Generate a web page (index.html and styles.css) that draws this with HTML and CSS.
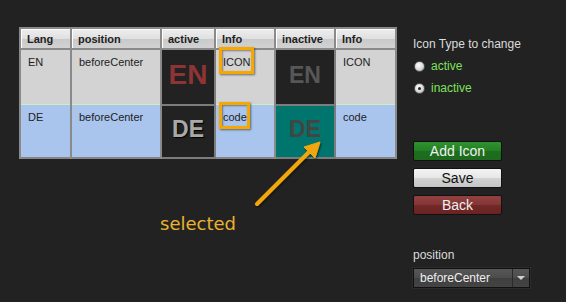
FILE: index.html
```html
<!DOCTYPE html>
<html>
<head>
<meta charset="utf-8">
<link rel="stylesheet" href="styles.css">
</head>
<body>
<div class="page">
  <div class="main">
    <table class="grid">
      <colgroup>
        <col class="c-lang">
        <col class="c-pos">
        <col class="c-act">
        <col class="c-info">
        <col class="c-inact">
        <col class="c-info2">
      </colgroup>
      <thead>
        <tr>
          <th>Lang</th>
          <th>position</th>
          <th>active</th>
          <th>Info</th>
          <th>inactive</th>
          <th>Info</th>
        </tr>
      </thead>
      <tbody>
        <tr class="row-en">
          <td>EN</td>
          <td>beforeCenter</td>
          <td class="icon dark"><span class="big red">EN</span></td>
          <td><span class="mark">ICON</span></td>
          <td class="icon dark"><span class="mid grey">EN</span></td>
          <td>ICON</td>
        </tr>
        <tr class="row-de">
          <td>DE</td>
          <td>beforeCenter</td>
          <td class="icon dark"><span class="mid light">DE</span></td>
          <td><span class="mark">code</span></td>
          <td class="icon teal"><span class="mid darkgrey">DE</span></td>
          <td>code</td>
        </tr>
      </tbody>
    </table>
    <div class="caption">selected</div>
    <svg class="arrow" width="80" height="80" viewBox="0 0 80 80">
      <defs>
        <filter id="sh" x="-20%" y="-20%" width="140%" height="140%">
          <feDropShadow dx="1" dy="1" stdDeviation="1" flood-color="#000" flood-opacity="0.6"/>
        </filter>
      </defs>
      <g filter="url(#sh)" stroke="#f2a60c" fill="#f2a60c">
        <line x1="6" y1="68" x2="60" y2="14" stroke-width="4" stroke-linecap="round"/>
        <polygon points="69,6 64,22 53,11" stroke-width="1" stroke-linejoin="round"/>
      </g>
    </svg>
  </div>
  <div class="side">
    <div class="label">Icon Type to change</div>
    <label class="radio"><span class="dot"></span><span>active</span></label>
    <label class="radio"><span class="dot on"></span><span>inactive</span></label>
    <div class="buttons">
      <div class="btn green">Add Icon</div>
      <div class="btn white">Save</div>
      <div class="btn red">Back</div>
    </div>
    <div class="label pos">position</div>
    <div class="select"><span class="sel-text">beforeCenter</span><span class="sel-arrow"></span></div>
  </div>
</div>
</body>
</html>
```
FILE: styles.css
```css
html, body {
  margin: 0;
  padding: 0;
  background: #222222;
  width: 566px;
  height: 302px;
  overflow: hidden;
  font-family: "Liberation Sans", Arial, sans-serif;
}
.page {
  display: flex;
  align-items: flex-start;
}
.main {
  position: relative;
  padding: 27px 0 0 19px;
  width: 376px;
  flex-shrink: 0;
}
.grid {
  border-collapse: collapse;
  border: 2px solid #858585;
  table-layout: fixed;
  width: 376px;
  font-size: 11px;
  color: #222;
}
.c-lang { width: 51px; }
.c-pos { width: 90px; }
.c-act { width: 54px; }
.c-info { width: 60px; }
.c-inact { width: 60px; }
.c-info2 { width: 61px; }
.grid th {
  height: 19px;
  padding: 0 0 0 6px;
  text-align: left;
  font-weight: bold;
  font-size: 11px;
  color: #1e1e1e;
  background: linear-gradient(#eeeeee 0%, #e0e0e0 50%, #c9c9c9 51%, #d2d2d2 100%);
  border: 2px solid #8a8a8a;
  box-shadow: inset 1px 1px 0 #ffffff;
  white-space: nowrap;
  overflow: hidden;
}
.grid td {
  vertical-align: top;
  padding: 6px 0 0 7px;
  border-left: 2px solid #8a8a8a;
  border-right: 2px solid #8a8a8a;
  white-space: nowrap;
}
.row-en td {
  height: 48px;
  background: #d3d3d3;
  border-bottom: 1px solid #c6f2b4;
}
.row-de td {
  height: 46px;
  background: #a9c5ee;
}
.grid td.icon {
  padding: 0;
  text-align: center;
  vertical-align: middle;
  border: 2px solid #7c7c7c;
}
.grid td.dark { background: #222222; }
.grid td.teal { background: #00756e; }
.big {
  display: inline-block;
  font-size: 28px;
  font-weight: bold;
  line-height: 28px;
  margin-top: -4px;
}
.mid {
  display: inline-block;
  font-size: 23px;
  font-weight: bold;
  line-height: 24px;
  margin-top: -4px;
}
.red { color: #8e3434; }
.grey { color: #575757; }
.light { color: #a9a9a9; text-shadow: 1px 1px 1px #000; }
.darkgrey { color: #444444; }
.mark {
  position: relative;
}
.mark::after {
  content: "";
  position: absolute;
  left: -4px;
  right: -3px;
  top: -9px;
  height: 21px;
  border: 3px solid #f7a800;
  box-shadow: 1px 1px 2px rgba(0,0,0,0.5), inset 1px 1px 2px rgba(0,0,0,0.4);
}
.caption {
  margin: 54px 0 0 141px;
  font-family: "DejaVu Sans", sans-serif;
  font-size: 18px;
  color: #e9b22f;
}
.arrow {
  position: absolute;
  left: 251px;
  top: 136px;
}
.side {
  margin-left: 18px;
  padding-top: 37px;
  display: flex;
  flex-direction: column;
  width: 150px;
}
.label {
  font-size: 12px;
  color: #dcdcdc;
  line-height: 14px;
}
.radio {
  display: flex;
  align-items: center;
  gap: 6px;
  font-size: 12px;
  color: #7ee05a;
  height: 22px;
  margin-left: 1px;
}
.radio:first-of-type { margin-top: 4px; }
.dot {
  width: 11px;
  height: 11px;
  border-radius: 50%;
  background: radial-gradient(circle at 40% 35%, #ffffff 0%, #d8d8d8 55%, #a0a0a0 100%);
  border: 1px solid #555;
  box-sizing: border-box;
  position: relative;
}
.dot.on::after {
  content: "";
  position: absolute;
  left: 3px;
  top: 3px;
  width: 3px;
  height: 3px;
  border-radius: 50%;
  background: #222;
}
.buttons {
  margin-top: 42px;
  display: flex;
  flex-direction: column;
  gap: 7px;
}
.btn {
  width: 89px;
  height: 20px;
  box-sizing: border-box;
  border: 1px solid #111;
  border-radius: 2px;
  font-size: 14px;
  line-height: 18px;
  text-align: center;
}
.btn.green {
  color: #f0f0f0;
  background: linear-gradient(#2f9230 0%, #237f24 50%, #1c6e1d 51%, #1e6a1e 100%);
}
.btn.white {
  color: #111;
  background: linear-gradient(#f4f4f4 0%, #e6e6e6 50%, #d2d2d2 51%, #c6c6c6 100%);
}
.btn.red {
  color: #f0f0f0;
  background: linear-gradient(#944040 0%, #833636 50%, #742828 51%, #6a2222 100%);
}
.label.pos {
  margin-top: 33px;
}
.select {
  margin-top: 6px;
  width: 117px;
  height: 20px;
  box-sizing: border-box;
  border: 1px solid #111;
  display: flex;
  background: linear-gradient(#575757 0%, #4c4c4c 50%, #3f3f3f 51%, #444 100%);
  box-shadow: 0 0 0 1px #2c2c2c;
}
.sel-text {
  flex: 1;
  font-size: 12px;
  color: #eeeeee;
  line-height: 18px;
  padding-left: 6px;
}
.sel-arrow {
  width: 16px;
  border-left: 1px solid #2a2a2a;
  position: relative;
}
.sel-arrow::after {
  content: "";
  position: absolute;
  left: 4px;
  top: 7px;
  border-left: 4px solid transparent;
  border-right: 4px solid transparent;
  border-top: 4px solid #d0d0d0;
}
```
